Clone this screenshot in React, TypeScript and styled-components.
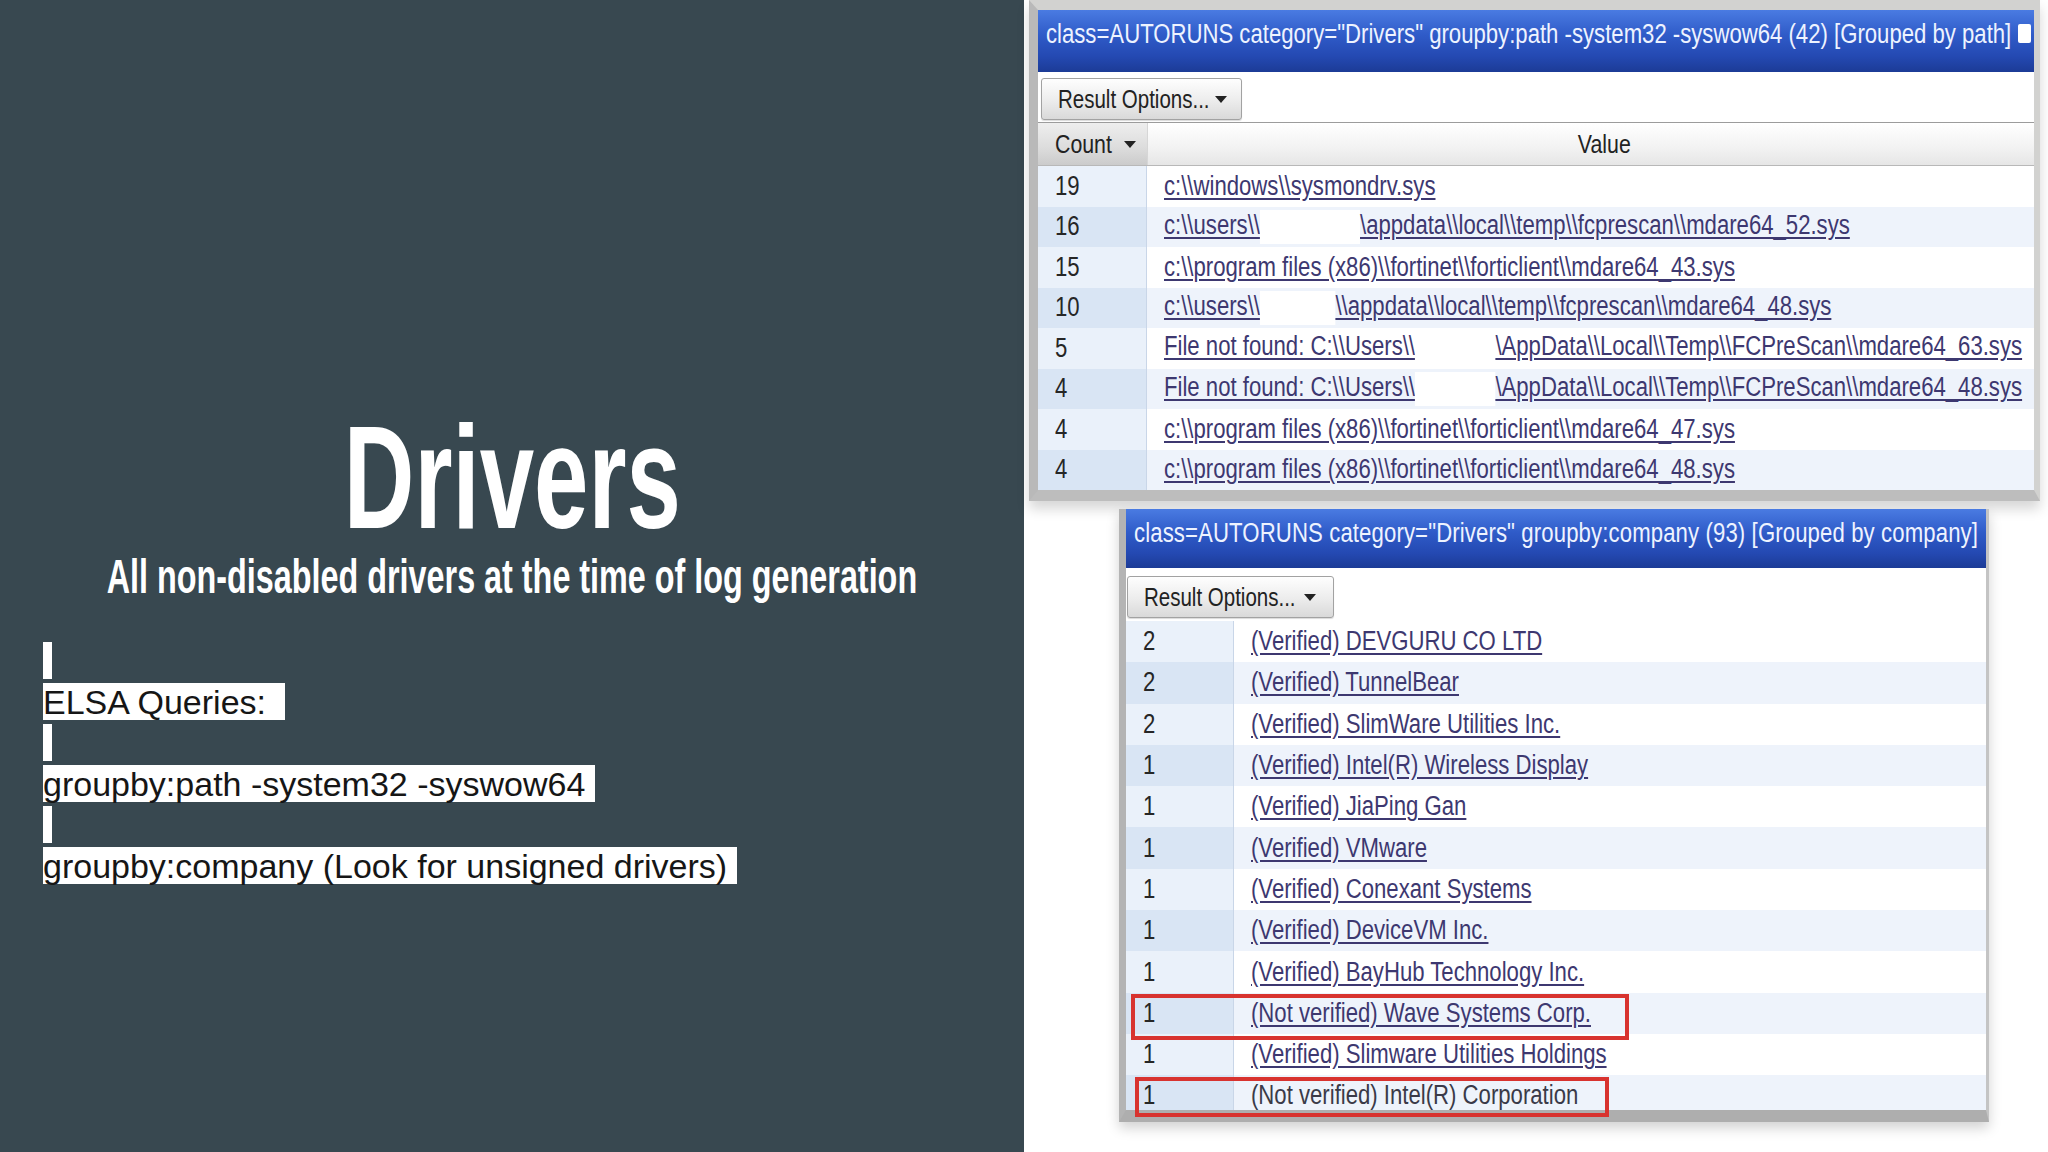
import React from "react";
import styled, { createGlobalStyle } from "styled-components";

const SANS = `"Liberation Sans", Arial, Helvetica, sans-serif`;

const GlobalStyle = createGlobalStyle`
  html, body { margin: 0; padding: 0; background: #ffffff; }
  body { font-family: ${SANS}; overflow: hidden; }
  * { box-sizing: border-box; }
`;

const Slide = styled.div`
  display: grid;
  grid-template-columns: 1024px 1024px;
  width: 2048px;
  height: 1152px;
  overflow: hidden;
`;

/* ---------- left: dark info panel ---------- */

const InfoPanel = styled.section`
  display: flex;
  flex-direction: column;
  padding-top: 404px;
  background: #384850;
`;

const Heading = styled.h1`
  align-self: center;
  margin: 0;
  color: #ffffff;
  font: 700 147px/147px ${SANS};
  white-space: nowrap;
  transform: scaleX(0.665);
`;

const Subheading = styled.p`
  align-self: center;
  margin: 1px 0 0;
  color: #ffffff;
  font: 700 49px/49px ${SANS};
  white-space: nowrap;
  transform: scaleX(0.66);
`;

const QueryList = styled.div`
  display: flex;
  flex-direction: column;
  align-items: flex-start;
  margin-top: 41px;
  padding-left: 43px;
`;

const QueryLine = styled.div`
  display: flex;
  align-items: flex-start;
  height: 41px;
`;

const Highlight = styled.span`
  display: inline-block;
  min-width: 9px;
  height: 37px;
  background: #ffffff;
  color: #161616;
  font: 400 34px/38px ${SANS};
  white-space: pre;
`;

/* ---------- right: screenshots ---------- */

const ShotsColumn = styled.section`
  display: flex;
  flex-direction: column;
  align-items: flex-start;
  padding-left: 5px;
  background: #ffffff;
`;

const Window = styled.div`
  position: relative;
  display: flex;
  flex-direction: column;
  background: #ffffff;
  border-style: solid;
  border-color: #d2d2d0;
`;

const TopWindow = styled(Window)`
  width: 1011px;
  border-width: 10px 6px 11px 9px;
  border-left-color: #b9b9b9;
  border-bottom-color: #bdbdbd;
  box-shadow: 0 8px 12px rgba(0, 0, 0, 0.16);
`;

const BottomWindow = styled(Window)`
  width: 870px;
  margin: 8px 0 0 90px;
  border-width: 0 3px 12px 7px;
  border-left-color: #b4b4b4;
  border-right-color: #c4c4c4;
  border-bottom-color: #aeaeae;
  box-shadow: 0 6px 12px rgba(0, 0, 0, 0.18);
`;

const Squeeze = styled.span<{ $origin?: string }>`
  display: inline-block;
  white-space: pre;
  transform: scaleX(0.82);
  transform-origin: ${(p) => p.$origin ?? "left"} center;
`;

const FlowlessText = styled(Squeeze)`
  flex: 0 0 0;
  width: 0;
`;

const TitleBar = styled.div<{ $height: number; $tracking?: number }>`
  display: flex;
  height: ${(p) => p.$height}px;
  padding: 9px 3px 0 8px;
  background: linear-gradient(180deg, #4a7be2 0%, #2f5bc8 40%, #2449b2 75%, #1c3b96 100%);
  color: #eef3ff;
  font: 400 27px/30px ${SANS};
  letter-spacing: ${(p) => p.$tracking ?? 0}px;
  overflow: hidden;
`;

const CornerBox = styled.span`
  flex: none;
  width: 13px;
  height: 19px;
  margin: 5px 0 0 auto;
  border-radius: 2px;
  background: #ffffff;
`;

const Toolbar = styled.div<{ $height: number; $pad: string }>`
  display: flex;
  align-items: flex-start;
  height: ${(p) => p.$height}px;
  padding: ${(p) => p.$pad};
  background: #ffffff;
`;

const OptionsButton = styled.button<{ $width: number; $right: number }>`
  display: flex;
  align-items: center;
  width: ${(p) => p.$width}px;
  height: 42px;
  padding: 0 ${(p) => p.$right}px 0 16px;
  border: 1px solid #a2a2a2;
  border-radius: 3px;
  background: linear-gradient(180deg, #fefefe 0%, #ececec 55%, #d9d9d9 100%);
  box-shadow: 0 1px 1px rgba(0, 0, 0, 0.15);
  color: #222222;
  font: 400 25px/1 ${SANS};
`;

const Caret = styled.svg`
  flex: none;
  margin-left: auto;
`;

const HeaderRow = styled.div`
  display: grid;
  grid-template-columns: 109px 1fr;
  height: 44px;
  border-top: 1px solid #9c9c9c;
  border-bottom: 1px solid #b8b8b8;
  color: #222222;
  font: 400 26px/1 ${SANS};
`;

const HeaderCount = styled.div`
  display: flex;
  align-items: center;
  padding: 0 11px 0 17px;
  background: linear-gradient(180deg, #eeeeee 0%, #dcdcdc 60%, #cbcbcb 100%);
`;

const HeaderValue = styled.div`
  display: flex;
  align-items: center;
  justify-content: center;
  padding-left: 26px;
  background: linear-gradient(180deg, #ffffff 0%, #f2f2f2 60%, #e6e6e6 100%);
  border-left: 1px solid #d6d6d6;
`;

const Body = styled.div<{ $height?: number }>`
  display: flex;
  flex-direction: column;
  ${(p) => (p.$height ? `height: ${p.$height}px;` : "")}
  overflow: hidden;
`;

const Row = styled.div<{ $height: number; $count: number }>`
  display: grid;
  grid-template-columns: ${(p) => p.$count}px 1fr;
  flex: none;
  height: ${(p) => p.$height}px;
  font: 400 27px/1 ${SANS};
`;

const CountCell = styled.div<{ $alt: boolean }>`
  display: flex;
  align-items: center;
  padding-left: 17px;
  background: ${(p) => (p.$alt ? "#d9e5f4" : "#eaf1fa")};
  border-right: 1px solid #c9d6e8;
  color: #262626;
`;

const ValueCell = styled.div<{ $alt: boolean }>`
  display: flex;
  align-items: center;
  padding-left: 17px;
  background: ${(p) => (p.$alt ? "#eef3fb" : "#ffffff")};
  overflow: hidden;
`;

const PathLink = styled.a<{ $plain?: boolean }>`
  color: ${(p) => (p.$plain ? "#3a3a48" : "#3d3870")};
  text-decoration: ${(p) => (p.$plain ? "none" : "underline")};
  text-underline-offset: 3px;
`;

const Redaction = styled.span<{ $width: number }>`
  display: inline-block;
  width: ${(p) => p.$width}px;
  height: 34px;
  vertical-align: middle;
  background: #ffffff;
`;

const Annotation = styled.div<{ $left: number; $top: number; $width: number; $height: number }>`
  position: absolute;
  left: ${(p) => p.$left}px;
  top: ${(p) => p.$top}px;
  width: ${(p) => p.$width}px;
  height: ${(p) => p.$height}px;
  border: 4px solid #d8332f;
  pointer-events: none;
`;

/* ---------- data ---------- */

type PathRow = { count: number; parts: string[]; gap?: number };

const pathRows: PathRow[] = [
  { count: 19, parts: [String.raw`c:\\windows\\sysmondrv.sys`] },
  {
    count: 16,
    parts: [String.raw`c:\\users\\`, String.raw`\appdata\\local\\temp\\fcprescan\\mdare64_52.sys`],
    gap: 122,
  },
  { count: 15, parts: [String.raw`c:\\program files (x86)\\fortinet\\forticlient\\mdare64_43.sys`] },
  {
    count: 10,
    parts: [String.raw`c:\\users\\`, String.raw`\\appdata\\local\\temp\\fcprescan\\mdare64_48.sys`],
    gap: 92,
  },
  {
    count: 5,
    parts: [String.raw`File not found: C:\\Users\\`, String.raw`\AppData\\Local\\Temp\\FCPreScan\\mdare64_63.sys`],
    gap: 98,
  },
  {
    count: 4,
    parts: [String.raw`File not found: C:\\Users\\`, String.raw`\AppData\\Local\\Temp\\FCPreScan\\mdare64_48.sys`],
    gap: 98,
  },
  { count: 4, parts: [String.raw`c:\\program files (x86)\\fortinet\\forticlient\\mdare64_47.sys`] },
  { count: 4, parts: [String.raw`c:\\program files (x86)\\fortinet\\forticlient\\mdare64_48.sys`] },
];

const companyRows: { count: number; name: string }[] = [
  { count: 2, name: "(Verified) DEVGURU CO LTD" },
  { count: 2, name: "(Verified) TunnelBear" },
  { count: 2, name: "(Verified) SlimWare Utilities Inc." },
  { count: 1, name: "(Verified) Intel(R) Wireless Display" },
  { count: 1, name: "(Verified) JiaPing Gan" },
  { count: 1, name: "(Verified) VMware" },
  { count: 1, name: "(Verified) Conexant Systems" },
  { count: 1, name: "(Verified) DeviceVM Inc." },
  { count: 1, name: "(Verified) BayHub Technology Inc." },
  { count: 1, name: "(Not verified) Wave Systems Corp." },
  { count: 1, name: "(Verified) Slimware Utilities Holdings" },
  { count: 1, name: "(Not verified) Intel(R) Corporation" },
];

const queryLines = [
  "",
  "ELSA Queries:\u00a0\u00a0",
  "",
  "groupby:path -system32 -syswow64\u00a0",
  "",
  "groupby:company (Look for unsigned drivers)\u00a0",
];

function DownCaret() {
  return (
    <Caret width="12" height="7" viewBox="0 0 12 7">
      <polygon points="0,0 12,0 6,7" fill="#222" />
    </Caret>
  );
}

function ResultOptions({ width, right }: { width: number; right: number }) {
  return (
    <OptionsButton $width={width} $right={right}>
      <FlowlessText>Result Options...</FlowlessText>
      <DownCaret />
    </OptionsButton>
  );
}

export default function App() {
  return (
    <>
      <GlobalStyle />
      <Slide>
        <InfoPanel>
          <Heading>Drivers</Heading>
          <Subheading>All non-disabled drivers at the time of log generation</Subheading>
          <QueryList>
            {queryLines.map((line, i) => (
              <QueryLine key={i}>
                <Highlight>{line}</Highlight>
              </QueryLine>
            ))}
          </QueryList>
        </InfoPanel>

        <ShotsColumn>
          <TopWindow>
            <TitleBar $height={62}>
              <FlowlessText>
                class=AUTORUNS category="Drivers" groupby:path -system32 -syswow64 (42) [Grouped by path]
              </FlowlessText>
              <CornerBox />
            </TitleBar>
            <Toolbar $height={50} $pad="6px 0 0 3px">
              <ResultOptions width={201} right={14} />
            </Toolbar>
            <HeaderRow>
              <HeaderCount>
                <FlowlessText>Count</FlowlessText>
                <DownCaret />
              </HeaderCount>
              <HeaderValue>
                <Squeeze $origin="center">Value</Squeeze>
              </HeaderValue>
            </HeaderRow>
            <Body>
              {pathRows.map((row, i) => (
                <Row key={i} $height={40.5} $count={109}>
                  <CountCell $alt={i % 2 === 1}>
                    <Squeeze>{row.count}</Squeeze>
                  </CountCell>
                  <ValueCell $alt={i % 2 === 1}>
                    <Squeeze>
                      <PathLink href="#">{row.parts[0]}</PathLink>
                      {row.parts[1] && (
                        <>
                          <Redaction $width={row.gap ?? 0} />
                          <PathLink href="#">{row.parts[1]}</PathLink>
                        </>
                      )}
                    </Squeeze>
                  </ValueCell>
                </Row>
              ))}
            </Body>
          </TopWindow>

          <BottomWindow>
            <TitleBar $height={59} $tracking={0.15}>
              <FlowlessText>
                class=AUTORUNS category="Drivers" groupby:company (93) [Grouped by company]
              </FlowlessText>
            </TitleBar>
            <Toolbar $height={53} $pad="8px 0 0 1px">
              <ResultOptions width={207} right={17} />
            </Toolbar>
            <Body $height={489}>
              {companyRows.map((row, i) => (
                <Row key={i} $height={41.3} $count={108}>
                  <CountCell $alt={i % 2 === 1}>
                    <Squeeze>{row.count}</Squeeze>
                  </CountCell>
                  <ValueCell $alt={i % 2 === 1}>
                    <Squeeze>
                      <PathLink href="#" $plain={i === companyRows.length - 1}>
                        {row.name}
                      </PathLink>
                    </Squeeze>
                  </ValueCell>
                </Row>
              ))}
            </Body>
            <Annotation $left={5} $top={485} $width={498} $height={46} />
            <Annotation $left={9} $top={568} $width={474} $height={40} />
          </BottomWindow>
        </ShotsColumn>
      </Slide>
    </>
  );
}
